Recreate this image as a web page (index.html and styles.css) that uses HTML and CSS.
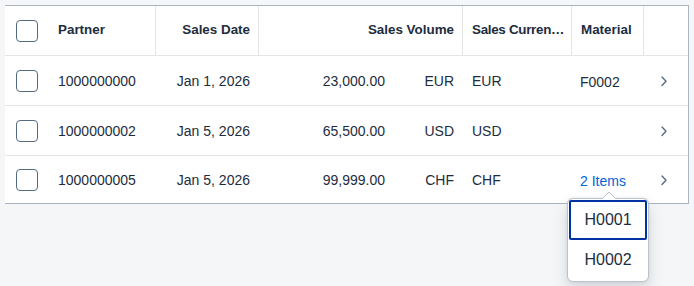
FILE: index.html
```html
<!DOCTYPE html>
<html lang="en">
<head>
<meta charset="utf-8">
<title>Sales</title>
<link rel="stylesheet" href="styles.css">
</head>
<body>
<div class="page">
  <div class="table">
    <div class="row head">
      <div class="cell sel"><span class="cb"></span></div>
      <div class="cell hc">Partner</div>
      <div class="cell hc end">Sales Date</div>
      <div class="cell hc end">Sales Volume</div>
      <div class="cell hc cur"><span class="trunc">Sales Currency</span></div>
      <div class="cell hc">Material</div>
      <div class="cell hc last"></div>
    </div>
    <div class="row">
      <div class="cell sel"><span class="cb"></span></div>
      <div class="cell">1000000000</div>
      <div class="cell end">Jan 1, 2026</div>
      <div class="cell end"><span class="amt">23,000.00</span><span class="unit">EUR</span></div>
      <div class="cell">EUR</div>
      <div class="cell mat">F0002</div>
      <div class="cell nav"><svg width="16" height="16" viewBox="0 0 16 16"><path d="M6 4 L10 8.2 L6 12.4" fill="none" stroke="#556b82" stroke-width="1.4" stroke-linecap="round" stroke-linejoin="round"/></svg></div>
    </div>
    <div class="row">
      <div class="cell sel"><span class="cb"></span></div>
      <div class="cell">1000000002</div>
      <div class="cell end">Jan 5, 2026</div>
      <div class="cell end"><span class="amt">65,500.00</span><span class="unit">USD</span></div>
      <div class="cell">USD</div>
      <div class="cell mat"></div>
      <div class="cell nav"><svg width="16" height="16" viewBox="0 0 16 16"><path d="M6 4 L10 8.2 L6 12.4" fill="none" stroke="#556b82" stroke-width="1.4" stroke-linecap="round" stroke-linejoin="round"/></svg></div>
    </div>
    <div class="row lastrow">
      <div class="cell sel"><span class="cb"></span></div>
      <div class="cell">1000000005</div>
      <div class="cell end">Jan 5, 2026</div>
      <div class="cell end"><span class="amt">99,999.00</span><span class="unit">CHF</span></div>
      <div class="cell">CHF</div>
      <div class="cell mat anchor">
        <span class="link">2 Items</span>
        <div class="popover">
          <svg class="arrow" width="16" height="9" viewBox="0 0 16 9"><path d="M0.5 8.5 L8 1 L15.5 8.5" fill="#fff" stroke="#bcc3ca" stroke-width="1"/><rect x="0" y="8.4" width="16" height="1" fill="#fff"/></svg>
          <div class="item focus">H0001</div>
          <div class="item">H0002</div>
        </div>
      </div>
      <div class="cell nav"><svg width="16" height="16" viewBox="0 0 16 16"><path d="M6 4 L10 8.2 L6 12.4" fill="none" stroke="#556b82" stroke-width="1.4" stroke-linecap="round" stroke-linejoin="round"/></svg></div>
    </div>
  </div>
</div>
</body>
</html>
```
FILE: styles.css
```css
html, body {
  margin: 0;
  padding: 0;
  background: #f5f6f7;
}
body {
  font-family: "Liberation Sans", Arial, sans-serif;
  font-size: 14px;
  color: #1d2d3e;
  min-height: 286px;
}
.page {
  padding-top: 5px;
  padding-left: 5px;
  width: 684px;
  min-height: 281px;
}
.table {
  background: #fff;
  border-top: 1px solid #a9b4be;
  border-right: 1px solid #a9b4be;
  border-bottom: 1px solid #a9b4be;
}
.row {
  display: grid;
  grid-template-columns: 44px 107px 103px 204px 109px 72px 44px;
  height: 49px;
  border-bottom: 1px solid #e5e5e5;
}
.row.lastrow {
  height: 47px;
  border-bottom: none;
}
.cell {
  display: flex;
  align-items: center;
  padding: 0 8px 0 9px;
  min-width: 0;
  white-space: nowrap;
}
.cell.end {
  justify-content: flex-end;
  padding-right: 9px;
}
.head .cell.hc {
  font-weight: bold;
  font-size: 13.4px;
  border-right: 1px solid #e5e5e5;
  padding-bottom: 3px;
}
.head .cell.end {
  padding-right: 8px;
}
.head .cell.last {
  border-right: none;
}
.head .cell.cur {
  padding-right: 6px;
}
.trunc {
  overflow: hidden;
  text-overflow: ellipsis;
  display: block;
  min-width: 0;
  letter-spacing: -0.3px;
}
.cell.sel {
  padding: 0 0 0 11px;
}
.cb {
  display: block;
  width: 20px;
  height: 20px;
  border: 1px solid #556b81;
  border-radius: 4px;
  background: #fff;
}
.unit {
  width: 69px;
  text-align: right;
}
.mat {
  padding-left: 8px;
  padding-top: 2px;
}
.nav {
  justify-content: center;
  padding: 0;
  margin-left: -5px;
}
.anchor {
  position: relative;
}
.link {
  color: #0064d9;
}
.popover {
  position: absolute;
  left: -5px;
  top: 42px;
  width: 78px;
  padding: 1px;
  background: #fff;
  border: 1px solid #bcc3ca;
  border-radius: 6px;
  box-shadow: 0 0 2px rgba(34, 53, 72, 0.16), 0 8px 16px rgba(34, 53, 72, 0.16);
  font-size: 16px;
  z-index: 2;
}
.arrow {
  position: absolute;
  left: 33px;
  top: -8px;
  display: block;
}
.item {
  height: 40px;
  display: flex;
  align-items: center;
  justify-content: center;
  box-sizing: border-box;
}
.item.focus {
  border: 2px solid #0032a5;
  border-radius: 2px;
}
```
